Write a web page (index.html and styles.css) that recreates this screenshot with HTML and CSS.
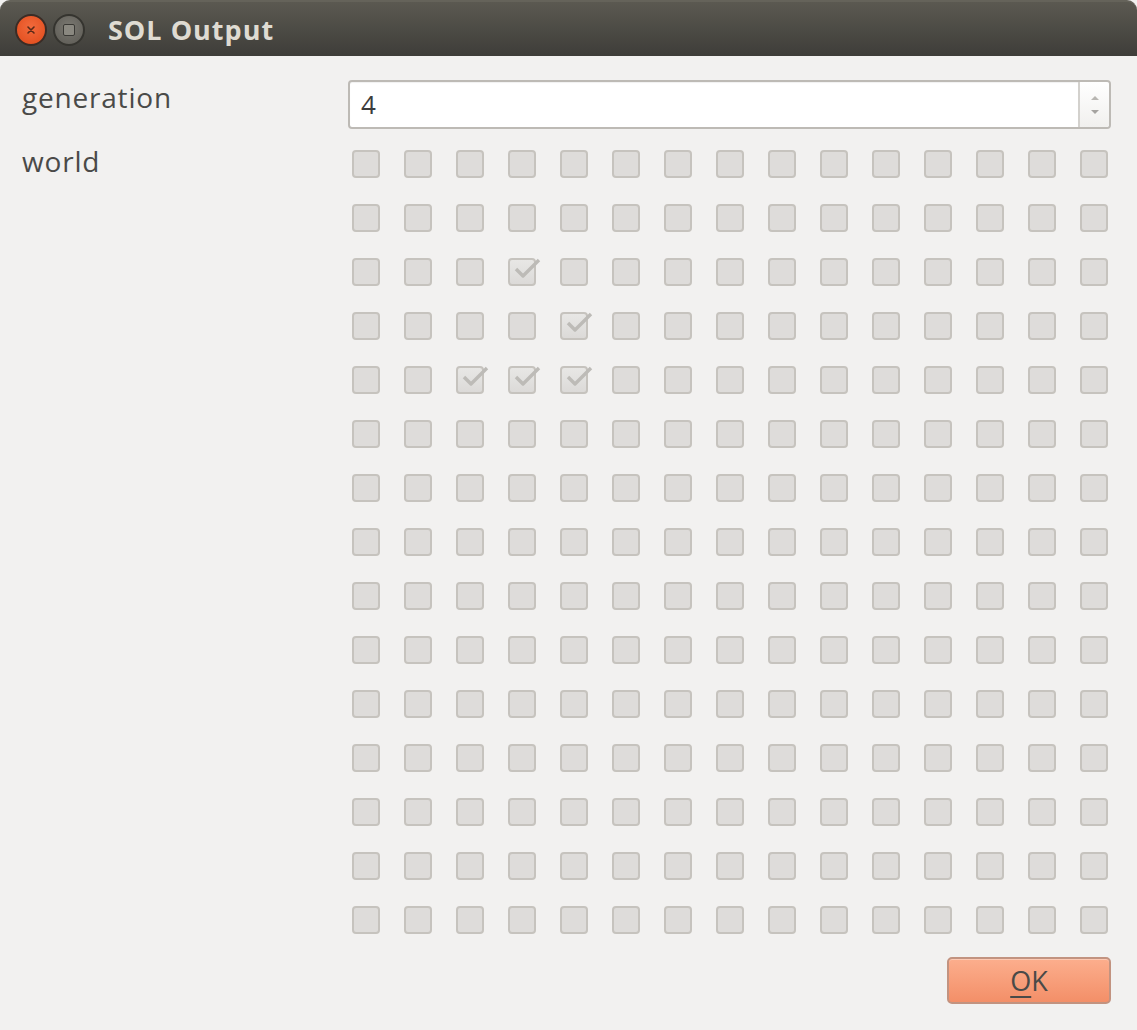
FILE: index.html
```html
<!DOCTYPE html>
<html>
<head>
<meta charset="utf-8">
<link rel="stylesheet" href="styles.css">
</head>
<body>
<div class="window">
  <div class="titlebar">
    <div class="wbtn close"><svg width="12" height="12" viewBox="0 0 12 12"><path d="M3 3 L9 9 M9 3 L3 9" stroke="#5a2a18" stroke-width="1.6" stroke-linecap="round"/></svg></div>
    <div class="wbtn max"><span class="sq"></span></div>
    <div class="title">SOL Output</div>
  </div>
  <div class="content">
    <div class="row">
      <div class="label">generation</div>
      <div class="spin">
        <div class="spin-text">4</div>
        <div class="spin-btns">
          <svg width="10" height="6" viewBox="0 0 10 6"><path d="M1 5 L5 1 L9 5 Z" fill="#b8b6b2"/></svg>
          <svg width="10" height="6" viewBox="0 0 10 6"><path d="M1 1 L5 5 L9 1 Z" fill="#a5a3a0"/></svg>
        </div>
      </div>
    </div>
    <div class="row world">
      <div class="label">world</div>
      <div class="grid" id="grid"></div>
    </div>
    <div class="footer">
      <button class="ok"><u>O</u>K</button>
    </div>
  </div>
</div>
<script src="app.js"></script>
</body>
</html>
```
FILE: app.js
```js
(function () {
  var alive = {"2,3":1, "3,4":1, "4,2":1, "4,3":1, "4,4":1};
  var g = document.getElementById('grid');
  var check = '<svg class="tick" width="30" height="24" viewBox="0 0 30 24"><path d="M5 12 L12 19 L28 3" fill="none" stroke="#bdbbb7" stroke-width="3.4" stroke-linejoin="round"/></svg>';
  var html = '';
  for (var r = 0; r < 15; r++) {
    for (var c = 0; c < 15; c++) {
      var on = alive[r + ',' + c];
      html += '<div class="cb' + (on ? ' on' : '') + '">' + (on ? check : '') + '</div>';
    }
  }
  g.innerHTML = html;
})();
```
FILE: styles.css
```css
html, body {
  margin: 0;
  padding: 0;
  background: #f2f1f0;
}
.window {
  width: 1137px;
  height: 1030px;
  background: #f2f1f0;
  font-family: "Open Sans", "Noto Sans", sans-serif;
  color: #4a4a48;
  overflow: hidden;
}
.titlebar {
  height: 56px;
  background: linear-gradient(#5b5951, #3e3d39);
  border-top: 2px solid #65635a;
  box-sizing: border-box;
  border-radius: 10px 10px 0 0;
  display: flex;
  align-items: center;
  padding-left: 15px;
}
.wbtn {
  width: 32px;
  height: 32px;
  border-radius: 50%;
  box-sizing: border-box;
  display: flex;
  align-items: center;
  justify-content: center;
  margin-top: 1px;
}
.close {
  background: radial-gradient(circle at 50% 40%, #f26a3c, #df4a1a);
  border: 2px solid #3a2c26;
}
.max {
  margin-left: 6px;
  background: radial-gradient(circle at 50% 40%, #7a7871, #5c5a54);
  border: 2px solid #35342f;
}
.sq {
  width: 10px;
  height: 10px;
  border: 1.5px solid #3a3935;
  border-radius: 2px;
  background: #8a8880;
}
.title {
  margin-left: 23px;
  font-weight: bold;
  font-size: 27px;
  color: #dfdbd2;
  letter-spacing: 1px;
}
.content {
  padding: 24px 26px 0 22px;
}
.row {
  display: flex;
}
.label {
  width: 326px;
  font-size: 28px;
  letter-spacing: 0.8px;
  line-height: 34px;
  flex-shrink: 0;
}
.spin {
  flex: 1;
  height: 49px;
  background: #fff;
  border: 2px solid #bdbab5;
  border-radius: 4px;
  box-sizing: border-box;
  display: flex;
  box-shadow: inset 0 1px 1px rgba(0,0,0,0.06);
}
.spin-text {
  flex: 1;
  font-size: 26px;
  line-height: 45px;
  padding-left: 11px;
  color: #3c3c3c;
}
.spin-btns {
  width: 29px;
  border-left: 2px solid #d3d1cd;
  background: linear-gradient(#ffffff, #f1f0ee);
  display: flex;
  flex-direction: column;
  align-items: center;
  justify-content: center;
  gap: 8px;
  border-radius: 0 3px 3px 0;
}
.world {
  margin-top: 21px;
}
.world .label {
  margin-top: -6px;
}
.grid {
  display: grid;
  grid-template-columns: repeat(15, 28px);
  grid-auto-rows: 28px;
  column-gap: 24px;
  row-gap: 26px;
  padding-left: 4px;
}
.cb {
  width: 28px;
  height: 28px;
  box-sizing: border-box;
  border: 2px solid #c6c3be;
  border-radius: 4px;
  background: #dedcda;
  position: relative;
}
.cb.on {
  background: linear-gradient(#e8e7e5, #dcdad8);
}
.tick {
  position: absolute;
  left: 1px;
  top: -3px;
}
.footer {
  display: flex;
  justify-content: flex-end;
  margin-top: 23px;
}
.ok {
  width: 164px;
  height: 47px;
  border: 2px solid #c29380;
  border-radius: 5px;
  background: linear-gradient(#fcae8d, #f38f68);
  font-family: "Open Sans", "Noto Sans", sans-serif;
  font-size: 27px;
  color: #4a4a48;
  padding: 0;
  box-shadow: inset 0 1px 0 rgba(255,255,255,0.35);
}
.ok u {
  text-decoration-thickness: 2px;
  text-underline-offset: 5px;
}
```
